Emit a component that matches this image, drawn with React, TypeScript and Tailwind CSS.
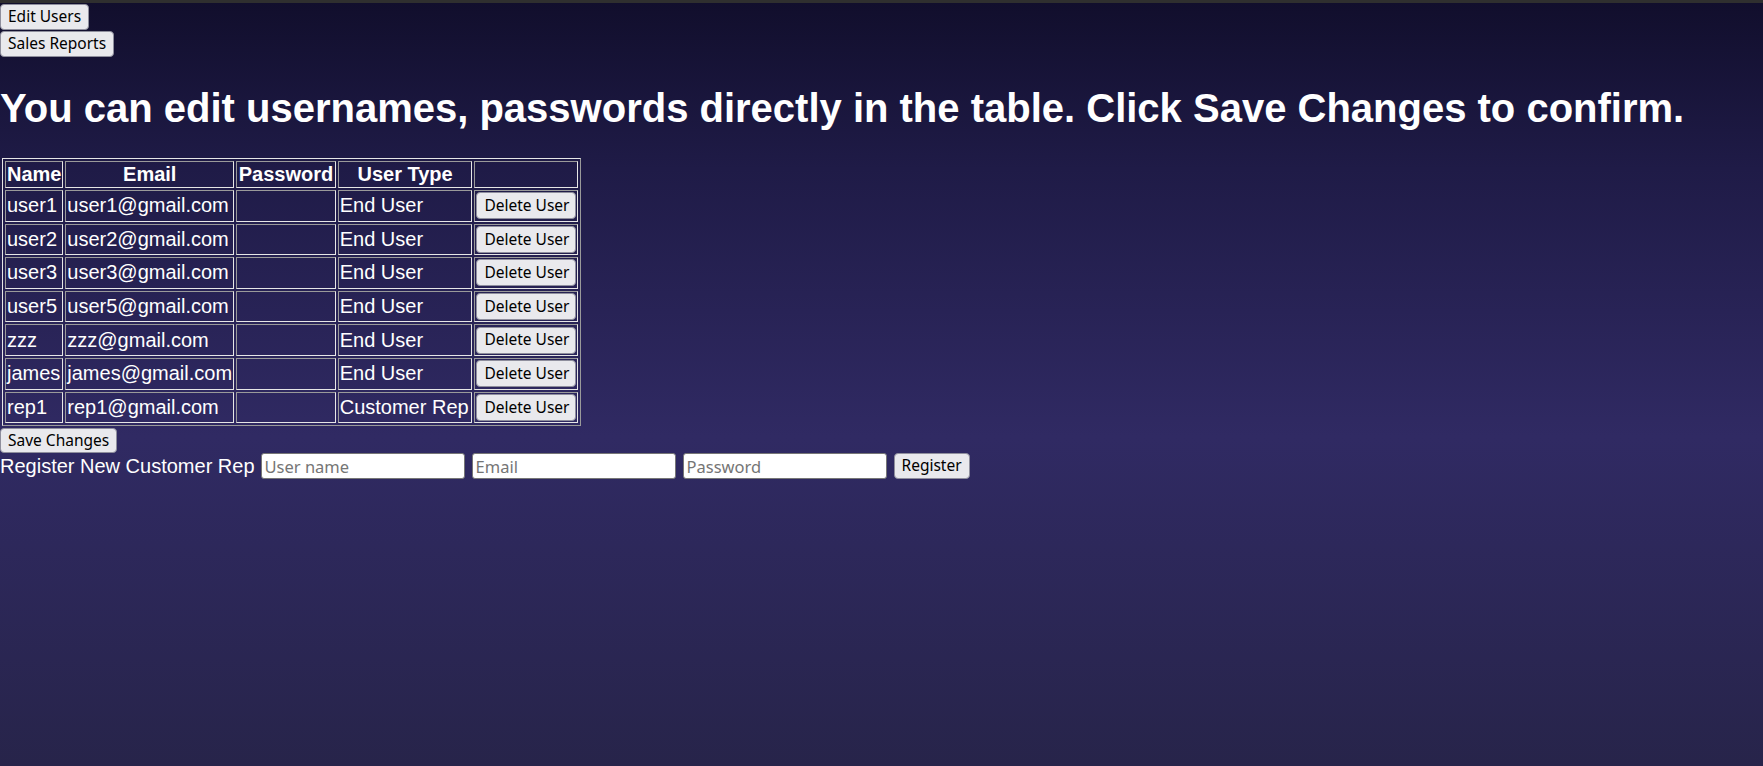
const users = [
  { name: 'user1', email: 'user1@gmail.com', type: 'End User' },
  { name: 'user2', email: 'user2@gmail.com', type: 'End User' },
  { name: 'user3', email: 'user3@gmail.com', type: 'End User' },
  { name: 'user5', email: 'user5@gmail.com', type: 'End User' },
  { name: 'zzz', email: 'zzz@gmail.com', type: 'End User' },
  { name: 'james', email: 'james@gmail.com', type: 'End User' },
  { name: 'rep1', email: 'rep1@gmail.com', type: 'Customer Rep' },
]

const btn =
  "bg-[#e9e9ed] text-black border border-[#8f8f9d] rounded-[4px] px-[7px] text-[15.5px] leading-none font-['Noto_Sans',sans-serif] whitespace-nowrap"

const cell = 'border border-t-[#9a9a9a] border-l-[#9a9a9a] border-b-[#e6e6e6] border-r-[#e6e6e6] p-[1px] align-middle'

const input =
  "w-[204px] h-[26px] bg-white border border-[#767676] rounded-[3px] px-[3px] text-[16.5px] leading-none text-black placeholder:text-[#757575] font-['Noto_Sans',sans-serif] outline-none"

export default function App() {
  return (
    <div className="min-h-screen w-full flex flex-col bg-[linear-gradient(to_bottom,#110e2c_0%,#1f1b47_22%,#302a63_57%,#27244a_100%)] text-white font-['Liberation_Sans',Arial,sans-serif]">
      <div className="h-[3px] bg-[#2f2f2f]" />
      <div className="flex flex-col items-start gap-[1px] pt-[1px]">
        <button className={`${btn} h-[26px]`}>Edit Users</button>
        <button className={`${btn} h-[26px]`}>Sales Reports</button>
      </div>

      <h1 className="text-[40px] font-bold leading-[46px] mt-[28px] mb-[27px] whitespace-nowrap">
        You can edit usernames, passwords directly in the table. Click Save Changes to confirm.
      </h1>

      <table className="ml-[2px] w-[579px] table-fixed border-separate border-spacing-[2.5px] border border-t-[#e6e6e6] border-l-[#e6e6e6] border-r-[#9a9a9a] border-b-[#9a9a9a] text-[20px] leading-[23px]">
        <thead>
          <tr className="h-[27px]">
            <th className={`${cell} w-[58px] font-bold`}>Name</th>
            <th className={`${cell} w-[168px] font-bold`}>Email</th>
            <th className={`${cell} w-[99px] font-bold`}>Password</th>
            <th className={`${cell} w-[134px] font-bold`}>User Type</th>
            <th className={`${cell} w-[103px]`}></th>
          </tr>
        </thead>
        <tbody>
          {users.map((u) => (
            <tr key={u.name} className="h-[31.6px]">
              <td className={`${cell} whitespace-nowrap`}>{u.name}</td>
              <td className={`${cell} whitespace-nowrap`}>{u.email}</td>
              <td className={cell}></td>
              <td className={`${cell} whitespace-nowrap overflow-hidden`}>{u.type}</td>
              <td className={cell}>
                <button className={`${btn} h-[27px] w-full block`}>Delete User</button>
              </td>
            </tr>
          ))}
        </tbody>
      </table>

      <div className="flex flex-col items-start mt-[2px]">
        <button className={`${btn} h-[25px]`}>Save Changes</button>
        <div className="flex items-center gap-[7px] h-[26px] text-[20px] leading-[23px]">
          <span className="whitespace-nowrap mr-[-1px]">Register New Customer Rep</span>
          <input className={input} placeholder="User name" />
          <input className={input} placeholder="Email" />
          <input className={input} type="password" placeholder="Password" />
          <button className={`${btn} h-[26px]`}>Register</button>
        </div>
      </div>
    </div>
  )
}
